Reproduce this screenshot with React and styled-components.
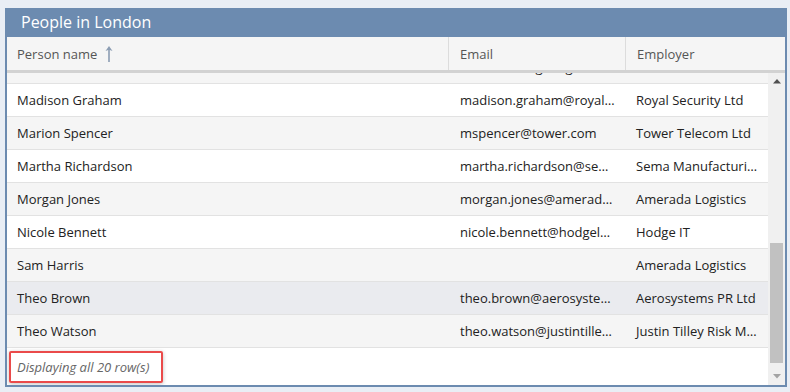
import React, { useEffect, useRef } from 'react'
import styled, { createGlobalStyle } from 'styled-components'

const GlobalStyle = createGlobalStyle`
  html, body {
    margin: 0;
    padding: 0;
    background: #e9eef5;
    font-family: "Open Sans", "Liberation Sans", sans-serif;
  }
  * { box-sizing: border-box; }
`

const Page = styled.div`
  padding: 8px 3px 6px 5px;
`

const Panel = styled.div`
  width: 782px;
  height: 379px;
  border: 2px solid #6c8bb0;
  border-top: 0;
  background: #fff;
  display: flex;
  flex-direction: column;
`

const TitleBar = styled.div`
  height: 29px;
  background: #6c8bb0;
  color: #fff;
  font-size: 16px;
  line-height: 29px;
  padding-left: 16px;
  margin: 0 -2px;
`

const HeaderRow = styled.div`
  display: grid;
  grid-template-columns: 441px 177px minmax(0, 1fr);
  height: 36px;
  background: #f5f5f5;
  border-bottom: 3px solid #d2d2d2;
`

const HeaderCell = styled.div`
  display: flex;
  align-items: center;
  gap: 8px;
  padding-left: ${p => p.$pad || 11}px;
  font-size: 13px;
  color: #555;
  border-left: ${p => (p.$first ? '0' : '1px solid #dcdcdc')};
`

const Body = styled.div`
  flex: 1;
  min-height: 0;
  display: flex;
`

const Viewport = styled.div`
  flex: 1;
  min-width: 0;
  overflow: hidden;
`

const Track = styled.div`
  width: 17px;
  flex-shrink: 0;
  background: #f0f0f0;
  display: flex;
  flex-direction: column;
  align-items: center;
`

const ScrollButton = styled.div`
  width: 17px;
  height: 17px;
  display: flex;
  align-items: center;
  justify-content: center;
`

const Spacer = styled.div`
  flex: 1;
`

const Thumb = styled.div`
  width: 13px;
  height: 120px;
  margin-bottom: 5px;
  background: #c1c1c1;
`

const Row = styled.div`
  display: grid;
  grid-template-columns: 441px 177px minmax(0, 1fr);
  height: 33px;
  border-bottom: 1px solid #e2e2e2;
  background: ${p => (p.$hover ? '#eaebef' : p.$odd ? '#f5f5f5' : '#fff')};
`

const Cell = styled.div`
  min-width: 0;
  padding: 0 ${p => p.$right || 8}px 0 ${p => p.$pad || 11}px;
  font-size: 13px;
  line-height: 32px;
  color: #222;
  white-space: nowrap;
  overflow: hidden;
  text-overflow: ellipsis;
`

const Footer = styled.div`
  height: 37px;
  display: flex;
  align-items: center;
  padding-left: 2px;
`

const Note = styled.span`
  font-size: 13px;
  font-style: italic;
  color: #666;
  padding: 5px 12px 5px 6px;
  border: 2px solid #ea4a4a;
  border-radius: 2px;
  box-shadow: 0 1px 4px rgba(0, 0, 0, 0.25);
`

const people = [
  ['Adam Clarke', 'adam.clarke@hodgelabs.com', 'Hodge IT'],
  ['Alice Hunter', 'alice.hunter@tower.com', 'Tower Telecom Ltd'],
  ['Ben Walker', 'ben.walker@royalsecurity.com', 'Royal Security Ltd'],
  ['Chloe Evans', 'chloe.evans@amerada.com', 'Amerada Logistics'],
  ['Daniel Reed', 'daniel.reed@sema.com', 'Sema Manufacturing'],
  ['Emma Lewis', 'emma.lewis@aerosystems.com', 'Aerosystems PR Ltd'],
  ['Harry Stone', 'harry.stone@justintilley.com', 'Justin Tilley Risk Management'],
  ['Isla Turner', 'isla.turner@hodgelabs.com', 'Hodge IT'],
  ['Jack Mitchell', 'jack.mitchell@tower.com', 'Tower Telecom Ltd'],
  ['Katie Ward', 'katie.ward@amerada.com', 'Amerada Logistics'],
  ['Leo Carter', 'leo.carter@sema.com', 'Sema Manufacturing'],
  ['Louise Hart', 'louise.hartlog@big.com', 'Tower Telecom Ltd'],
  ['Madison Graham', 'madison.graham@royalsecurity.com', 'Royal Security Ltd'],
  ['Marion Spencer', 'mspencer@tower.com', 'Tower Telecom Ltd'],
  ['Martha Richardson', 'martha.richardson@sema.com', 'Sema Manufacturing'],
  ['Morgan Jones', 'morgan.jones@amerada.com', 'Amerada Logistics'],
  ['Nicole Bennett', 'nicole.bennett@hodgelabs.com', 'Hodge IT'],
  ['Sam Harris', '', 'Amerada Logistics'],
  ['Theo Brown', 'theo.brown@aerosystems.com', 'Aerosystems PR Ltd'],
  ['Theo Watson', 'theo.watson@justintilley.com', 'Justin Tilley Risk Management'],
]

const SortArrow = () => (
  <svg width="8" height="17" viewBox="0 0 8 17">
    <path d="M4 1 L7.5 6 L4.8 5 L4.8 17 L3.2 17 L3.2 5 L0.5 6 Z" fill="#8c9db3" />
  </svg>
)

const Triangle = ({ down, color }) => (
  <svg width="8" height="5" viewBox="0 0 8 5">
    <path d={down ? 'M0 0 L8 0 L4 4.5 Z' : 'M0 4.5 L8 4.5 L4 0 Z'} fill={color} />
  </svg>
)

export default function App() {
  const viewRef = useRef(null)
  useEffect(() => {
    const el = viewRef.current
    if (el) el.scrollTop = el.scrollHeight
  }, [])

  return (
    <Page>
      <GlobalStyle />
      <Panel>
        <TitleBar>People in London</TitleBar>
        <HeaderRow>
          <HeaderCell $first $pad={10}>Person name <SortArrow /></HeaderCell>
          <HeaderCell>Email</HeaderCell>
          <HeaderCell>Employer</HeaderCell>
        </HeaderRow>
        <Body>
          <Viewport ref={viewRef}>
            {people.map(([name, email, employer], i) => (
              <Row key={name} $odd={i % 2 === 1} $hover={name === 'Theo Brown'}>
                <Cell $pad={10}>{name}</Cell>
                <Cell $pad={12}>{email}</Cell>
                <Cell $right={10}>{employer}</Cell>
              </Row>
            ))}
            <Footer>
              <Note>Displaying all 20 row(s)</Note>
            </Footer>
          </Viewport>
          <Track>
            <ScrollButton><Triangle color="#505050" /></ScrollButton>
            <Spacer />
            <Thumb />
            <ScrollButton><Triangle down color="#a3a3a3" /></ScrollButton>
          </Track>
        </Body>
      </Panel>
    </Page>
  )
}
